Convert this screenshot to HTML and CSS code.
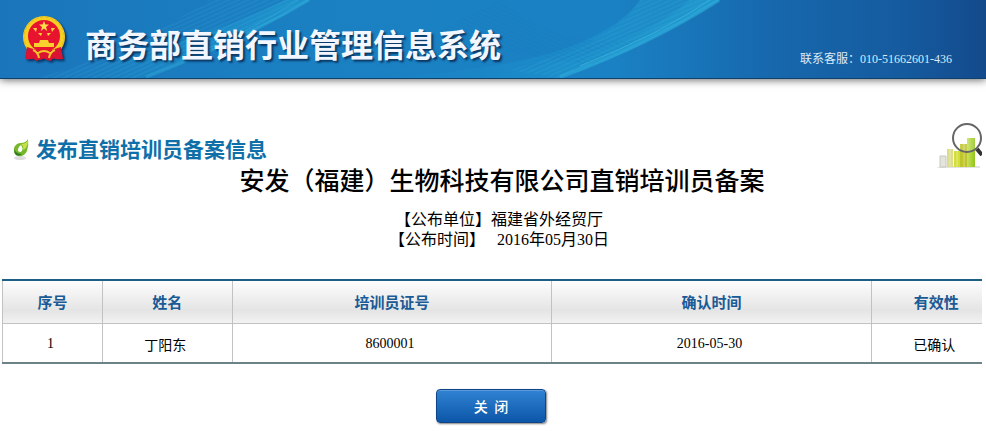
FILE: index.html
```html
<!DOCTYPE html>
<html lang="zh-CN">
<head>
    <meta charset="utf-8">
    <title>商务部直销行业管理信息系统</title>
    <link rel="stylesheet" href="styles.css">
</head>
<body>
    <header class="banner">
        <svg class="banner-waves" viewBox="0 0 986 78" preserveAspectRatio="none" aria-hidden="true">
            <defs>
                <linearGradient id="wave" x1="0" y1="0" x2="1" y2="0">
                    <stop offset="0" stop-color="#1c9ad0" stop-opacity="0"/>
                    <stop offset="1" stop-color="#22a4d6" stop-opacity=".5"/>
                </linearGradient>
                <pattern id="lines" width="5" height="4" patternUnits="userSpaceOnUse" patternTransform="rotate(-24)">
                    <path d="M0 1H5" stroke="#4fc0e6" stroke-width="1" opacity=".2"/>
                </pattern>
                <pattern id="lines2" width="5" height="4" patternUnits="userSpaceOnUse" patternTransform="rotate(24)">
                    <path d="M0 1H5" stroke="#0f6fae" stroke-width="1" opacity=".25"/>
                </pattern>
            </defs>
            <path d="M20 78Q160 60 285 0H310Q230 48 140 78Z" fill="url(#wave)"/>
            <path d="M40 78Q130 50 210 0H310Q230 48 140 78Z" fill="url(#lines)"/>
            <path d="M360 78Q590 70 640 0H720Q650 46 560 78Z" fill="url(#wave)"/>
            <path d="M460 78Q610 66 690 0H720Q650 46 560 78Z" fill="url(#wave)"/>
            <path d="M500 0Q560 50 640 40L600 65Q520 60 440 30Z" fill="url(#lines2)"/>
            <path d="M510 70Q620 40 640 0H718Q650 46 560 78Z" fill="url(#lines)"/>
            <path d="M146 77Q235 44 309 0" fill="none" stroke="#35b4de" stroke-width="3" opacity=".4"/>
            <path d="M180 60Q250 32 298 0" fill="none" stroke="#35b4de" stroke-width="1" opacity=".5"/>
            <path d="M560 77Q650 44 719 0" fill="none" stroke="#35b4de" stroke-width="4" opacity=".4"/>
            <path d="M580 66Q660 34 710 0" fill="none" stroke="#4cc4e6" stroke-width="1" opacity=".5"/>
        </svg>
        <svg class="emblem" viewBox="0 0 46 48" aria-hidden="true">
            <path d="M8 32L5 42L12 43L15 46L22 43L29 46L33 43L41 42L38 32Z" fill="#dc1233"/>
            <circle cx="23" cy="22" r="21" fill="#f5cf22"/>
            <circle cx="23" cy="22" r="20" fill="none" stroke="#e8b41e" stroke-width="1" stroke-dasharray="3 2"/>
            <circle cx="23" cy="21" r="16" fill="#e8142f"/>
            <path d="M23 6L24.400 9.600H28L25 12L26.200 16L23 13.600L19.800 16L21 12L18 9.600H21.600Z" fill="#fbe04a"/>
            <path d="M12 13l4 0-1 4zM30 13l4 0-3 4zM17 18l4 0-1 3zM26 18l4 0-3 3z" fill="#fbd23c"/>
            <path d="M19 25H27L28 28H33V32H13V28H18Z" fill="#f8cf2c"/>
            <path d="M6 32Q23 39 40 32L42 44Q36 45 32 43Q28 47 23 43Q18 47 14 43Q10 45 4 44Z" fill="#dc1233"/>
            <path d="M12 35Q17 37 18 43M34 35Q29 37 28 43M17 38Q23 34 29 38" fill="none" stroke="#f5c528" stroke-width="2"/>
        </svg>
        <h1 class="site-name">商务部直销行业管理信息系统</h1>
        <p class="contact">联系客服：010-51662601-436</p>
    </header>

    <main class="content">
        <div class="section-bar">
            <svg class="leaf" viewBox="0 0 18 22" aria-hidden="true">
                <ellipse cx="8" cy="19" rx="6" ry="2" fill="#ddd"/>
                <path d="M16 0Q17 6 15 12Q12 18 7 17Q1 16 2 9Q4 4 9 4Q14 4 16 0Z" fill="#76b82a"/>
                <path d="M16 1Q16 9 11 11Q12 7 9 5Q14 5 16 1Z" fill="#c6df4c"/>
                <path d="M9 6Q12 10 9 13Q5 13 6 10Q7 7 9 6Z" fill="#fff"/>
                <path d="M2 10Q4 15 10 15Q7 18 4 16Q2 14 2 10Z" fill="#2f7d22"/>
            </svg>
            <h2 class="section-title">发布直销培训员备案信息</h2>
            <svg class="chart" viewBox="0 0 46 48" aria-hidden="true">
                <defs>
                    <linearGradient id="bar" x1="0" y1="0" x2="1" y2="0">
                        <stop offset="0" stop-color="#c9e25a"/>
                        <stop offset="1" stop-color="#93c41c"/>
                    </linearGradient>
                </defs>
                <path d="M0 46L6 44H44V46Z" fill="#e2e2e2"/>
                <path d="M4 34H10V45H4Z" fill="#e4e4dc" stroke="#c8c8bc"/>
                <path d="M11 27H17V45H11Z" fill="#dcdc8a"/>
                <path d="M18 29H24V45H18Z" fill="#d3df38"/>
                <path d="M24 22H31V45H24Z" fill="#bfc52c"/>
                <path d="M31 16H39V45H31Z" fill="url(#bar)"/>
                <path d="M14 27V45M21 29V45M28 22V45" stroke="#fff" stroke-width="1" opacity=".4"/>
                <circle cx="31" cy="16" r="14" fill="#fff" fill-opacity=".15" stroke="#666" stroke-width="2"/>
                <path d="M41 27L46 33" stroke="#333" stroke-width="4"/>
            </svg>
        </div>

        <h3 class="notice-title">安发（福建）生物科技有限公司直销培训员备案</h3>
        <div class="notice-meta">
            <p>【公布单位】福建省外经贸厅</p>
            <p>【公布时间】&nbsp;&nbsp; 2016年05月30日</p>
        </div>

        <table class="records">
            <thead>
                <tr>
                    <th class="col-no">序号</th>
                    <th class="col-name">姓名</th>
                    <th class="col-wide">培训员证号</th>
                    <th class="col-wide">确认时间</th>
                    <th class="col-valid">有效性</th>
                </tr>
            </thead>
            <tbody>
                <tr>
                    <td>1</td>
                    <td>丁阳东</td>
                    <td>8600001</td>
                    <td>2016-05-30</td>
                    <td>已确认</td>
                </tr>
            </tbody>
        </table>

        <div class="actions">
            <button type="button" class="close-button" onclick="window.close()">关&nbsp; 闭</button>
        </div>
    </main>
</body>
</html>
```
FILE: styles.css
```css
* {
    box-sizing: border-box;
}

body {
    margin: 0;
    background: #fff;
    color: #000;
    font-family: "Liberation Serif", "Noto Sans CJK SC", serif;
    font-size: 14px;
}

h1, h2, h3, p {
    margin: 0;
}

/* top banner */
.banner {
    position: relative;
    display: flex;
    align-items: center;
    height: 79px;
    padding: 0 34px 0 21px;
    background: linear-gradient(to right, #1b75bb 0%, #1a80c2 30%, #1a82c4 62%, #1768ad 78%, #155a9e 92%, #134a8c 100%);
    border-bottom: 1px solid #10406c;
    box-shadow: 0 1px 8px rgba(0, 0, 0, 0.6);
}

.banner-waves {
    position: absolute;
    top: 0;
    left: 0;
    width: 100%;
    height: 100%;
}

.emblem {
    position: relative;
    width: 46px;
    height: 48px;
    margin-right: 18px;
    filter: drop-shadow(2px 2px 1px rgba(0, 30, 70, 0.7));
}

.site-name {
    position: relative;
    padding-top: 7px;
    color: #f2f7ff;
    font-family: "Noto Sans CJK SC", sans-serif;
    font-size: 32px;
    line-height: 40px;
    text-shadow: 2px 2px 2px #0b3560;
    white-space: nowrap;
}

.contact {
    position: relative;
    margin-left: auto;
    padding-top: 40px;
    color: #dcebfa;
    font-family: "Liberation Serif", "Noto Sans CJK TC", serif;
    font-size: 12px;
    line-height: 16px;
    white-space: nowrap;
}

/* page content, the table runs past the right edge */
.content {
    margin: 43px 4px 0 2px;
    overflow: hidden;
}

.section-bar {
    display: flex;
    align-items: center;
    height: 48px;
}

.leaf {
    width: 18px;
    height: 22px;
    margin: 8px 6px 0 10px;
}

.section-title {
    padding-top: 3px;
    color: #0f6fa8;
    font-family: "Noto Sans CJK SC", sans-serif;
    font-size: 21px;
    line-height: 28px;
}

.chart {
    width: 46px;
    height: 48px;
    margin-left: auto;
}

.notice-title {
    padding-left: 20px;
    font-size: 25px;
    font-weight: 500;
    line-height: 24px;
    text-align: center;
}

.notice-meta {
    padding: 16px 0 29px 14px;
    font-size: 16px;
    line-height: 20px;
    text-align: center;
}

.records {
    width: 102%;
    border-collapse: collapse;
    table-layout: fixed;
    border-top: 2px solid #1c5f85;
    border-bottom: 2px solid #6b8288;
}

.records th,
.records td {
    border: 1px solid #c0c2c4;
    text-align: center;
}

.records th {
    height: 43px;
    padding: 0;
    border-top: 2px solid #1c5f85;
    background: linear-gradient(#fdfdfd, #e4e4e4 70%, #f2f2f2);
    color: #1a5a96;
    font-family: "Noto Sans CJK SC", sans-serif;
    font-size: 15px;
}

.records td {
    height: 40px;
    padding: 2px 4px 0 0;
    border-bottom: 2px solid #6b8288;
}

.col-no {
    width: 10%;
}

.col-name,
.col-valid {
    width: 13%;
}

.col-wide {
    width: 32%;
}

.actions {
    display: flex;
    justify-content: center;
    padding: 25px 2px 12px 0;
}

.close-button {
    width: 110px;
    height: 34px;
    padding: 0;
    border: 1px solid #0e4587;
    border-radius: 4px;
    background: linear-gradient(#3183d3, #0c56a8);
    box-shadow: 1px 1px 2px rgba(0, 0, 0, 0.5), inset 0 1px 0 #5b9bdb;
    color: #fff;
    font-family: "Noto Sans CJK SC", sans-serif;
    font-size: 14px;
    font-weight: 500;
    cursor: pointer;
}
```
